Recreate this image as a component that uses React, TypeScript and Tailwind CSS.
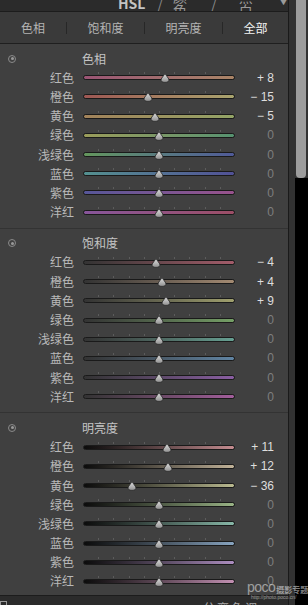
import React from "react";

const names = ["红色", "橙色", "黄色", "绿色", "浅绿色", "蓝色", "紫色", "洋红"];

const sections = [
  {
    title: "色相",
    values: [8, -15, -5, 0, 0, 0, 0, 0],
    tracks: [
      "from-[#9a5474] to-[#a98466]",
      "from-[#9e5753] to-[#a8a46e]",
      "from-[#a2825a] to-[#93a466]",
      "from-[#9a9c5a] to-[#569270]",
      "from-[#64965c] to-[#505a98]",
      "from-[#54908f] to-[#515196]",
      "from-[#565698] to-[#98528c]",
      "from-[#87559a] to-[#9c4e66]",
    ],
  },
  {
    title: "饱和度",
    values: [-4, 4, 9, 0, 0, 0, 0, 0],
    tracks: [
      "from-[#333333] to-[#a35c6a]",
      "from-[#333333] to-[#a38a72]",
      "from-[#333333] to-[#a0a06e]",
      "from-[#333333] to-[#75a066]",
      "from-[#333333] to-[#66a092]",
      "from-[#333333] to-[#6084a3]",
      "from-[#333333] to-[#8a5ea3]",
      "from-[#333333] to-[#a35e9c]",
    ],
  },
  {
    title: "明亮度",
    values: [11, 12, -36, 0, 0, 0, 0, 0],
    tracks: [
      "from-[#0c0c0c] to-[#c48c90]",
      "from-[#0c0c0c] to-[#c2b399]",
      "from-[#0c0c0c] to-[#baba90]",
      "from-[#0c0c0c] to-[#9ab486]",
      "from-[#0c0c0c] to-[#88b8a8]",
      "from-[#0c0c0c] to-[#88a4c0]",
      "from-[#0c0c0c] to-[#ad8ec0]",
      "from-[#0c0c0c] to-[#c290b2]",
    ],
  },
];

const ticks = [1, 2, 3, 4, 5, 6, 7, 8, 9];

function fmt(v: number) {
  if (v > 0) return "+ " + v;
  if (v < 0) return "− " + Math.abs(v);
  return "0";
}

function Thumb() {
  return (
    <svg width="10" height="10" viewBox="0 0 10 10">
      <defs>
        <linearGradient id="tg" x1="0" y1="0" x2="0" y2="1">
          <stop offset="0" stopColor="#e2e2e2" />
          <stop offset="1" stopColor="#8f8f8f" />
        </linearGradient>
      </defs>
      <path
        d="M5 0.6 L8.8 6 Q9.6 9.4 5 9.4 Q0.4 9.4 1.2 6 Z"
        fill="url(#tg)"
        stroke="#262626"
        strokeWidth="0.8"
      />
    </svg>
  );
}

function Slider({ value, track }: { value: number; track: string }) {
  return (
    <div className="relative w-[152px] h-full flex items-center">
      {ticks.map((t) => (
        <div
          key={t}
          className="absolute top-[4px] w-px h-[2px] bg-[#5c5c5c]"
          style={{ left: `${t * 10}%` }}
        />
      ))}
      <div
        className={`w-full h-[5px] rounded-full border border-[#1a1a1a] bg-linear-to-r ${track}`}
      />
      <div
        className="absolute top-[5px] -ml-[5px] flex"
        style={{ left: `${((value + 100) / 200) * 100}%` }}
      >
        <Thumb />
      </div>
    </div>
  );
}

function Section({
  title,
  values,
  tracks,
  last,
}: {
  title: string;
  values: number[];
  tracks: string[];
  last?: boolean;
}) {
  return (
    <div className={`pt-[5px] ${last ? "" : "pb-[6px] border-b border-[#333333]"}`}>
      <div className="h-[19.2px] flex items-center">
        <div className="w-[82px] pl-[8px] flex">
          <div className="w-[8px] h-[8px] rounded-full border border-[#8a8a8a] flex items-center justify-center">
            <div className="w-[3px] h-[3px] rounded-full bg-[#9a9a9a]" />
          </div>
        </div>
        <span className="text-[12px] text-[#c4c4c4] leading-none">{title}</span>
      </div>
      {names.map((n, i) => (
        <div key={n} className="h-[19.2px] flex items-center">
          <div className="w-[74px] text-right text-[12px] text-[#b9b9b9] leading-none">{n}</div>
          <div className="ml-[9px] h-full">
            <Slider value={values[i]} track={tracks[i]} />
          </div>
          <div
            className={`w-[39px] text-right text-[12px] leading-none font-['Liberation_Sans',sans-serif] ${
              values[i] === 0 ? "text-[#7e7e7e]" : "text-[#dedede]"
            }`}
          >
            {fmt(values[i])}
          </div>
        </div>
      ))}
    </div>
  );
}

export default function App() {
  return (
    <div className="relative w-[308px] h-[605px] flex bg-black overflow-hidden font-['Noto_Sans_CJK_SC','Liberation_Sans',sans-serif]">
      <div className="w-[288px] flex flex-col">
        {/* cut-off panel title */}
        <div className="h-[11px] overflow-hidden bg-[#2b2b2b] border-b border-[#1c1c1c] box-content flex items-start">
          <div className="-mt-[11px] flex items-center pl-[118px] text-[14px] leading-[14px] text-[#c4c4c4]">
            <span className="font-bold">HSL</span>
            <span className="ml-[12px] text-[#8a8a8a]">/</span>
            <span className="ml-[10px] text-[#9a9a9a]">颜色</span>
            <span className="ml-[12px] text-[#8a8a8a]">/</span>
            <span className="ml-[22px] text-[#9a9a9a]">黑白</span>
          </div>
          <span className="ml-[14px] -mt-[3px] text-[9px] leading-[9px] text-[#9a9a9a]">▼</span>
        </div>

        {/* tabs */}
        <div className="h-[31px] bg-[#3a3a3a] border-b border-[#1f1f1f] box-content flex items-center text-[12px]">
          <div className="w-[66px] text-center text-[#b4b4b4]">色相</div>
          <div className="w-px h-[12px] bg-[#272727]" />
          <div className="w-[77px] text-center text-[#b4b4b4]">饱和度</div>
          <div className="w-px h-[12px] bg-[#272727]" />
          <div className="w-[77px] text-center text-[#b4b4b4]">明亮度</div>
          <div className="w-px h-[12px] bg-[#272727]" />
          <div className="w-[65px] text-center text-[#f4f4f4]">全部</div>
        </div>

        {/* body */}
        <div className="flex-1 bg-[#404040] border-b border-[#1c1c1c] overflow-hidden">
          {sections.map((s, i) => (
            <Section key={s.title} {...s} last={i === sections.length - 1} />
          ))}
        </div>

        {/* cut-off bottom panel */}
        <div className="h-[9px] bg-[#2b2b2b] overflow-hidden flex items-start">
          <div className="mt-[5px] w-[7px] h-[7px] border border-[#9a9a9a]" />
          <div className="ml-[196px] pt-[6px] text-[12px] leading-[12px] text-[#a8a8a8] tracking-[2px]">分离色调</div>
        </div>
      </div>

      {/* scrollbar */}
      <div className="flex-1 flex border-l border-[#1a1a1a]">
        <div className="w-[6px] bg-[#323232]" />
        <div className="flex-1 flex flex-col">
          <div className="h-[178px] bg-[#333333] flex pl-[1px] pr-[2px]">
            <div className="flex-1 bg-[#9d9d9d] rounded-b-[4px]" />
          </div>
          <div className="flex-1 bg-black" />
        </div>
      </div>

      {/* watermark */}
      <div className="absolute left-[247px] top-[580px] flex flex-col leading-none text-white/50 whitespace-nowrap">
        <div className="flex items-end">
          <span className="text-[14px] font-['Liberation_Sans',sans-serif] tracking-[-0.5px]">poco</span>
          <span className="text-[8px] ml-[1px] font-bold">摄影专题</span>
        </div>
        <span className="text-[5px] ml-[4px] mt-[1px] font-['Liberation_Sans',sans-serif]">http://photo.poco.cn/</span>
      </div>
    </div>
  );
}
